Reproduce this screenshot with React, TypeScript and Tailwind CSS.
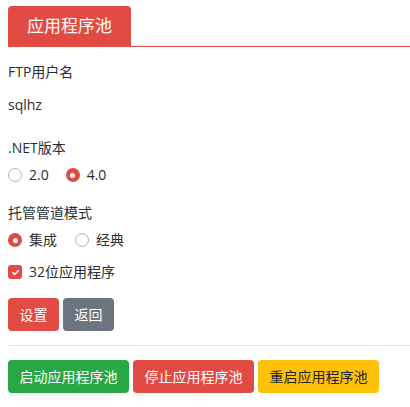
import React from "react";

const RED = "bg-[#e24b43]";

function Radio({ checked, label }: { checked: boolean; label: string }) {
  return (
    <label className="flex items-center gap-[7px]">
      {checked ? (
        <span className="w-[14px] h-[14px] rounded-full bg-[#e24b43] flex items-center justify-center">
          <span className="w-[5px] h-[5px] rounded-full bg-white" />
        </span>
      ) : (
        <span className="w-[14px] h-[14px] rounded-full border border-[#adb5bd] bg-white" />
      )}
      <span>{label}</span>
    </label>
  );
}

export default function App() {
  return (
    <div
      className="w-[410px] h-[407px] bg-white pt-[6px] pl-2 text-[14px] leading-[20px] text-[#2a2d31]"
      style={{ fontFamily: '"Open Sans", "Noto Sans CJK SC", sans-serif' }}
    >
      <div className="flex border-b border-[#e24b43]">
        <div className={`${RED} h-[40px] px-[19px] rounded-t-[4px] text-white text-[17px] flex items-center`}>
          应用程序池
        </div>
      </div>
      <div className="mt-[15px]">FTP用户名</div>
      <div className="mt-[13px]">sqlhz</div>
      <div className="mt-[23px]">.NET版本</div>
      <div className="mt-[7px] flex gap-[17px]">
        <Radio checked={false} label="2.0" />
        <Radio checked={true} label="4.0" />
      </div>
      <div className="mt-[18px]">托管管道模式</div>
      <div className="mt-[7px] flex gap-[18px]">
        <Radio checked={true} label="集成" />
        <Radio checked={false} label="经典" />
      </div>
      <div className="mt-[12px] flex items-center gap-[7px]">
        <span className="w-[14px] h-[14px] rounded-[3px] bg-[#e24b43] flex items-center justify-center">
          <svg width="9" height="9" viewBox="0 0 10 10">
            <path d="M2 5.2 L4.2 7.2 L8 3" stroke="white" strokeWidth="1.8" fill="none" strokeLinecap="round" strokeLinejoin="round" />
          </svg>
        </span>
        <span>32位应用程序</span>
      </div>
      <div className="mt-[16px] flex gap-1">
        <button className={`${RED} text-white h-[33px] px-[11.5px] rounded-[4px]`}>设置</button>
        <button className="bg-[#6c757d] text-white h-[33px] px-[11.5px] rounded-[4px]">返回</button>
      </div>
      <div className="mt-[14px] border-t border-[#e5e5e5]" />
      <div className="mt-[14px] flex gap-1">
        <button className="bg-[#28a745] text-white h-[33px] px-[11.5px] rounded-[4px]">启动应用程序池</button>
        <button className={`${RED} text-white h-[33px] px-[11.5px] rounded-[4px]`}>停止应用程序池</button>
        <button className="bg-[#ffc107] text-[#212529] h-[33px] px-[11.5px] rounded-[4px]">重启应用程序池</button>
      </div>
    </div>
  );
}
